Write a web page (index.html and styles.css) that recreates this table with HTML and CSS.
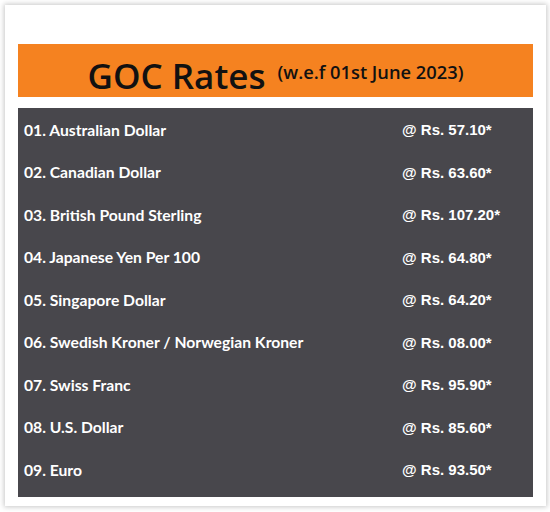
FILE: index.html
```html
<!DOCTYPE html>
<html>
<head>
<meta charset="utf-8">
<link rel="stylesheet" href="styles.css">
</head>
<body>
<div class="card">
  <div class="header">
    <span class="title">GOC Rates</span><span class="sub">(w.e.f 01st June 2023)</span>
  </div>
  <div class="panel">
    <div class="row"><span class="name">01. Australian Dollar</span><span class="rate">@ Rs. 57.10*</span></div>
    <div class="row"><span class="name">02. Canadian Dollar</span><span class="rate">@ Rs. 63.60*</span></div>
    <div class="row"><span class="name">03. British Pound Sterling</span><span class="rate">@ Rs. 107.20*</span></div>
    <div class="row"><span class="name">04. Japanese Yen Per 100</span><span class="rate">@ Rs. 64.80*</span></div>
    <div class="row"><span class="name">05. Singapore Dollar</span><span class="rate">@ Rs. 64.20*</span></div>
    <div class="row"><span class="name">06. Swedish Kroner / Norwegian Kroner</span><span class="rate">@ Rs. 08.00*</span></div>
    <div class="row"><span class="name">07. Swiss Franc</span><span class="rate">@ Rs. 95.90*</span></div>
    <div class="row"><span class="name">08. U.S. Dollar</span><span class="rate">@ Rs. 85.60*</span></div>
    <div class="row"><span class="name">09. Euro</span><span class="rate">@ Rs. 93.50*</span></div>
  </div>
</div>
</body>
</html>
```
FILE: styles.css
```css
html, body {
  margin: 0;
  padding: 0;
  background: #ffffff;
}
body {
  padding: 5px 4px 6px 5px;
  width: 550px;
  height: 512px;
  box-sizing: border-box;
  overflow: hidden;
}
.card {
  background: #ffffff;
  box-shadow: 0 0 5px 1px rgba(0, 0, 0, 0.22);
  height: 501px;
  box-sizing: border-box;
  padding: 39px 13px 9px 13px;
  display: flex;
  flex-direction: column;
  gap: 11px;
}
.header {
  background: #f58220;
  height: 53px;
  padding-top: 4px;
  box-sizing: border-box;
  text-align: center;
  line-height: 48px;
  color: #111111;
  font-family: "Open Sans", sans-serif;
  white-space: nowrap;
}
.title {
  font-size: 35px;
  font-weight: 600;
}
.sub {
  font-size: 18.3px;
  font-weight: 600;
  margin-left: 12px;
  vertical-align: 10px;
}
.panel {
  background: #48474c;
  flex: 1;
  padding: 1px 0 0 6px;
  display: flex;
  flex-direction: column;
}
.row {
  height: 42.5px;
  display: grid;
  grid-template-columns: 378px auto;
  align-items: center;
  color: #ffffff;
  font-size: 15px;
  padding-bottom: 1px;
  box-sizing: border-box;
}
.name {
  font-family: Lato, sans-serif;
  font-weight: 700;
  font-size: 15.7px;
}
.rate {
  font-family: "Liberation Sans", Arial, sans-serif;
  font-weight: 700;
}
```
